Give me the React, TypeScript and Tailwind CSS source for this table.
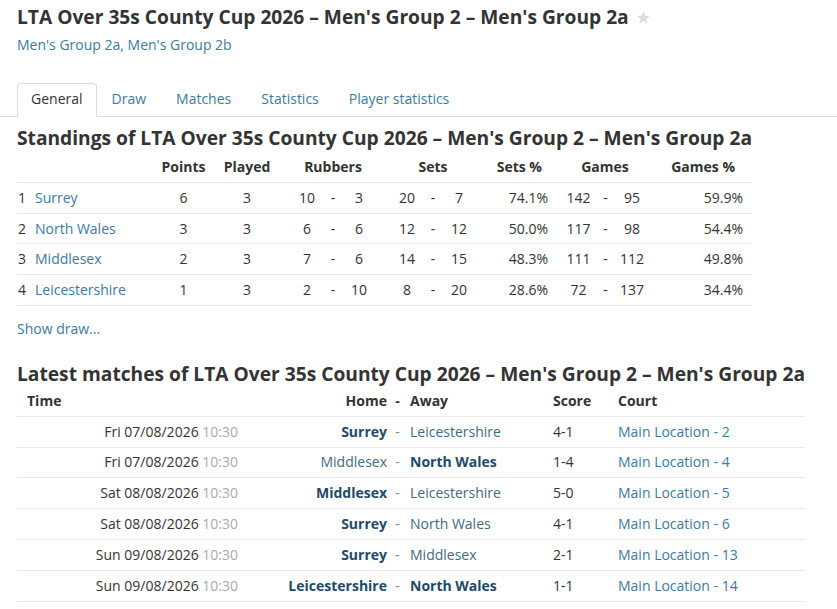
import React from "react";

const standings = [
  { r: 1, t: "Surrey", p: 6, pl: 3, ru: [10, 3], s: [20, 7], sp: "74.1%", g: [142, 95], gp: "59.9%" },
  { r: 2, t: "North Wales", p: 3, pl: 3, ru: [6, 6], s: [12, 12], sp: "50.0%", g: [117, 98], gp: "54.4%" },
  { r: 3, t: "Middlesex", p: 2, pl: 3, ru: [7, 6], s: [14, 15], sp: "48.3%", g: [111, 112], gp: "49.8%" },
  { r: 4, t: "Leicestershire", p: 1, pl: 3, ru: [2, 10], s: [8, 20], sp: "28.6%", g: [72, 137], gp: "34.4%" },
];

const matches = [
  { d: "Fri 07/08/2026", h: "Surrey", hb: true, a: "Leicestershire", ab: false, sc: "4-1", c: "Main Location - 2" },
  { d: "Fri 07/08/2026", h: "Middlesex", hb: false, a: "North Wales", ab: true, sc: "1-4", c: "Main Location - 4" },
  { d: "Sat 08/08/2026", h: "Middlesex", hb: true, a: "Leicestershire", ab: false, sc: "5-0", c: "Main Location - 5" },
  { d: "Sat 08/08/2026", h: "Surrey", hb: true, a: "North Wales", ab: false, sc: "4-1", c: "Main Location - 6" },
  { d: "Sun 09/08/2026", h: "Surrey", hb: true, a: "Middlesex", ab: false, sc: "2-1", c: "Main Location - 13" },
  { d: "Sun 09/08/2026", h: "Leicestershire", hb: true, a: "North Wales", ab: true, sc: "1-1", c: "Main Location - 14" },
];

const sGrid =
  "grid grid-cols-[14px_129px_47px_80px_40px_12px_40px_50px_8px_44px_75px_45px_9px_44px_98px]";
const mGrid = "grid grid-cols-[233px_140px_15px_140px_65px_195px]";

function Team({ name, bold }: { name: string; bold: boolean }) {
  return bold ? (
    <span className="font-bold text-[#1e4a68]">{name}</span>
  ) : (
    <span className="text-[#436b80]">{name}</span>
  );
}

export default function App() {
  return (
    <div className="w-[837px] h-[609px] overflow-hidden bg-white font-['Open_Sans',sans-serif] text-[14px] leading-[20px] text-[#333]">
      <div className="px-[17px] pt-[4px]">
        <h1 className="flex items-center text-[19.2px] leading-[26px] font-bold text-[#333]">
          <span>LTA Over 35s County Cup 2026 – Men's Group 2 – Men's Group 2a</span>
          <svg className="ml-[7px]" width="15" height="15" viewBox="0 0 24 24" fill="#dcdcdc">
            <path d="M12 2l2.9 6.9 7.1.6-5.4 4.7 1.7 7.3L12 17.6 5.7 21.5l1.7-7.3L2 9.5l7.1-.6z" />
          </svg>
        </h1>
        <div className="mt-[5px] text-[#3c7b9c]">Men's Group 2a, Men's Group 2b</div>
      </div>

      <div className="mt-[28px] flex border-b border-[#ddd] pl-[17px]">
        <div className="-mb-px rounded-t-[4px] border border-[#ddd] border-b-white bg-white pl-[13px] pr-[13px] pt-[5px] pb-[7px] text-[#333]">
          General
        </div>
        {["Draw", "Matches", "Statistics", "Player statistics"].map((t) => (
          <div key={t} className="px-[15px] pt-[6px] pb-[7px] text-[#3c7b9c]">
            {t}
          </div>
        ))}
      </div>

      <div className="px-[17px]">
        <h2 className="mt-[8px] text-[19.2px] leading-[26px] font-bold">
          Standings of LTA Over 35s County Cup 2026 – Men's Group 2 – Men's Group 2a
        </h2>
        <div className="w-[735px]">
          <div className={`${sGrid} h-[31px] items-center font-bold`}>
            <div />
            <div />
            <div className="text-center">Points</div>
            <div className="text-center">Played</div>
            <div className="col-span-3 text-center">Rubbers</div>
            <div className="col-span-3 pl-[6px] text-center">Sets</div>
            <div className="pr-[14px] text-right">Sets %</div>
            <div className="col-span-3 text-center">Games</div>
            <div className="pr-[17px] text-right">Games %</div>
          </div>
          {standings.map((s) => (
            <div key={s.r} className={`${sGrid} h-[30.7px] items-center border-t border-[#e8e8e8]`}>
              <div className="pl-[1px]">{s.r}</div>
              <div className="pl-[4px] text-[#3c7b9c]">{s.t}</div>
              <div className="text-center">{s.p}</div>
              <div className="text-center">{s.pl}</div>
              <div className="text-center">{s.ru[0]}</div>
              <div className="text-center">-</div>
              <div className="text-center">{s.ru[1]}</div>
              <div className="pl-[6px] text-center">{s.s[0]}</div>
              <div className="text-center">-</div>
              <div className="text-center">{s.s[1]}</div>
              <div className="pr-[8px] text-right">{s.sp}</div>
              <div className="text-center">{s.g[0]}</div>
              <div className="text-center">-</div>
              <div className="text-center">{s.g[1]}</div>
              <div className="pr-[9px] text-right">{s.gp}</div>
            </div>
          ))}
          <div className="border-t border-[#e8e8e8]" />
        </div>

        <div className="mt-[13px] text-[#3c7b9c]">Show draw...</div>

        <h2 className="mt-[22px] text-[19.2px] leading-[26px] font-bold">
          Latest matches of LTA Over 35s County Cup 2026 – Men's Group 2 – Men's Group 2a
        </h2>
        <div className="w-[788px]">
          <div className={`${mGrid} h-[29px] items-center font-bold`}>
            <div className="pl-[10px]">Time</div>
            <div className="pr-[3px] text-right">Home</div>
            <div className="text-center">-</div>
            <div className="pl-[5px]">Away</div>
            <div className="pl-[8px]">Score</div>
            <div className="pl-[8px]">Court</div>
          </div>
          {matches.map((m, i) => (
            <div key={i} className={`${mGrid} h-[30.8px] items-center border-t border-[#e8e8e8]`}>
              <div className="pr-[12px] text-right">
                {m.d} <span className="text-[#aaa]">10:30</span>
              </div>
              <div className="pr-[3px] text-right">
                <Team name={m.h} bold={m.hb} />
              </div>
              <div className="text-center text-[#888]">-</div>
              <div className="pl-[5px]">
                <Team name={m.a} bold={m.ab} />
              </div>
              <div className="pl-[8px]">{m.sc}</div>
              <div className="pl-[8px] text-[#3c7b9c]">{m.c}</div>
            </div>
          ))}
          <div className="border-t border-[#e8e8e8]" />
        </div>
      </div>
    </div>
  );
}
